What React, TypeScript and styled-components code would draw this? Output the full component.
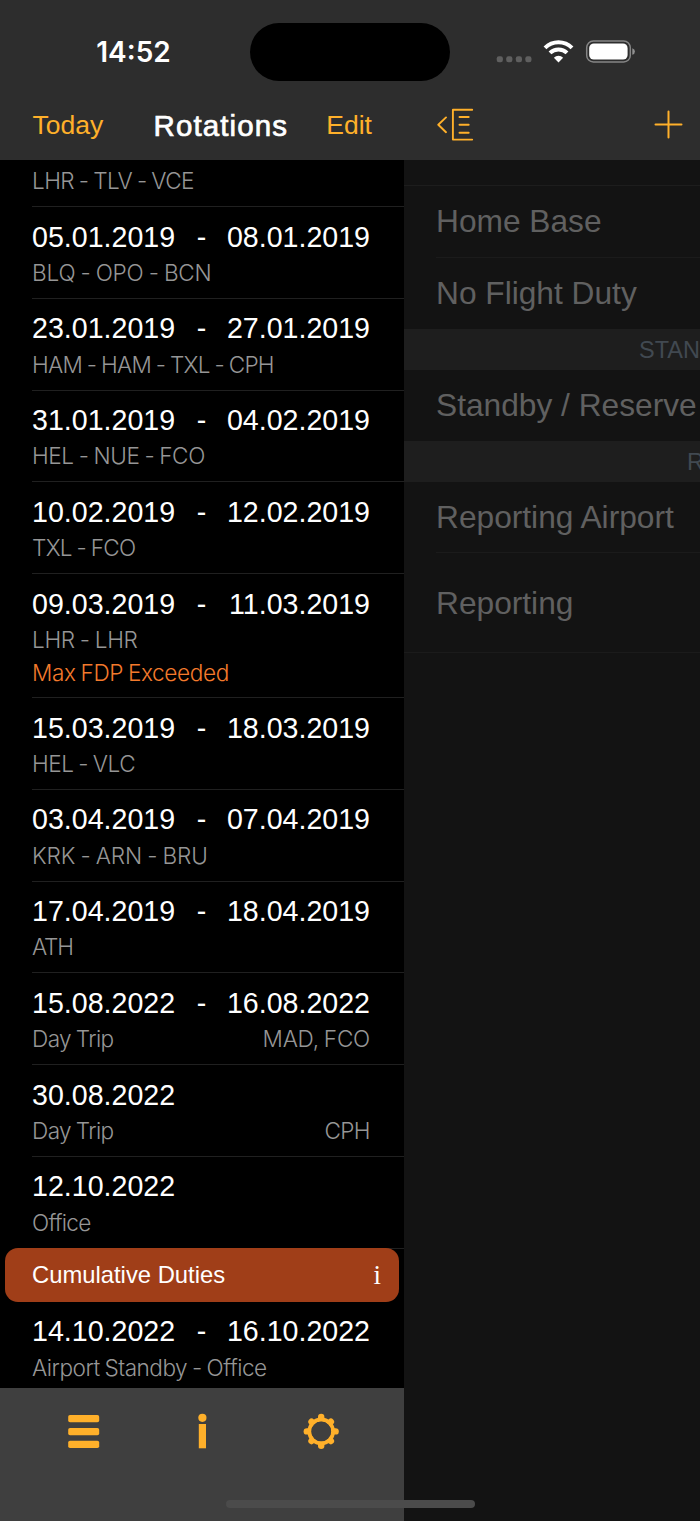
import React from "react";
import styled, { createGlobalStyle } from "styled-components";

const amber = "#ffb02a";
const sans = '"Liberation Sans", Arial, sans-serif';
const light = 'Inter, "Liberation Sans", sans-serif';

const GlobalStyle = createGlobalStyle`
  * { box-sizing: border-box; }
  body { margin: 0; background: #000; font-family: ${sans}; }
`;

const Screen = styled.div`
  position: relative;
  width: 700px;
  height: 1521px;
  display: flex;
  flex-direction: column;
  overflow: hidden;
`;

const Top = styled.header`
  height: 160px;
  flex: none;
  background: #2d2d2d;
`;

const StatusBar = styled.div`
  height: 104px;
  display: grid;
  grid-template-columns: 250px 200px 250px;
  align-items: center;
`;

const Clock = styled.div`
  padding: 0 0 0 17px;
  text-align: center;
  font: 600 28px/34px ${light};
  color: #fff;
`;

const Island = styled.div`
  height: 58px;
  border-radius: 29px;
  background: #000;
`;

const StatusIcons = styled.div`
  display: flex;
  align-items: center;
  padding-left: 46px;
`;

const NavBar = styled.nav`
  height: 56px;
  display: grid;
  grid-template-columns: 404px 296px;
`;

const NavGroup = styled.div<{ $right?: boolean }>`
  display: flex;
  justify-content: space-between;
  align-items: center;
  padding: ${(p) => (p.$right ? "0 17px 15px 33px" : "0 32px 14px 32.5px")};
`;

const NavButton = styled.button`
  border: 0;
  padding: 0;
  background: none;
  color: ${amber};
  font: 400 26.5px/32px ${sans};
  display: flex;
`;

const Title = styled.h1`
  margin: 0 0 -1px;
  padding-left: 12px;
  color: #fff;
  font: 400 29.5px/34px ${sans};
  letter-spacing: 1.1px;
  -webkit-text-stroke: 0.7px #fff;
`;

const Body = styled.div`
  flex: 1;
  min-height: 0;
  display: grid;
  grid-template-columns: 404px 296px;
`;

const Sidebar = styled.section`
  display: flex;
  flex-direction: column;
  min-height: 0;
  background: #000;
`;

const List = styled.div`
  height: 1228px;
  flex: none;
  overflow: hidden;
`;

const Row = styled.div<{ $tall?: boolean; $partial?: boolean }>`
  height: ${(p) => (p.$partial ? "47px" : p.$tall ? "124px" : "91.75px")};
  margin-left: 32px;
  padding: ${(p) => (p.$partial ? "5px 34px 0 0" : "12.5px 34px 0 0")};
  border-bottom: 1px solid #202020;
`;

const Dates = styled.div`
  display: grid;
  grid-template-columns: 145px 1fr 145px;
  font-size: 28.6px;
  line-height: 34px;
  color: #fff;
  white-space: nowrap;
`;

const Dash = styled.span`
  text-align: center;
  padding-left: 1px;
`;

const EndDate = styled.span`
  text-align: right;
`;

const Detail = styled.div<{ $flush?: boolean }>`
  margin-top: ${(p) => (p.$flush ? 0 : 3.25)}px;
  display: flex;
  justify-content: space-between;
  font: 300 22.6px/32px ${light};
  color: #969696;
`;

const Tracked = styled.span<{ $track?: number }>`
  letter-spacing: ${(p) => p.$track ?? -0.4}px;
  word-spacing: -1px;
`;

const Warning = styled.div`
  font: 300 22.6px/33px ${light};
  color: #f47a2c;
`;

const Card = styled.div`
  height: 54px;
  margin: -1px 5px 0.25px;
  padding: 0 18px 0 27px;
  border-radius: 13px;
  background: #a03e18;
  display: flex;
  justify-content: space-between;
  align-items: center;
  color: #fff;
  font-size: 23.8px;
`;

const InfoMark = styled.span`
  font: 400 27px/30px "Liberation Serif", serif;
`;

const TabBar = styled.footer`
  flex: 1;
  background: #3f3f3f;
  display: grid;
  grid-template-columns: repeat(3, 119px);
  justify-content: center;
  justify-items: center;
  align-items: start;
  padding: 22px 0 0 0;
`;

const Panel = styled.section`
  background: #131313;
  overflow: hidden;
`;

const Spacer = styled.div`
  height: 26px;
  border-bottom: 1px solid #1d1d1d;
`;

const Field = styled.div<{ $height: number; $line?: "inset" | "full" }>`
  height: ${(p) => p.$height}px;
  margin-left: ${(p) => (p.$line === "full" ? 0 : 32)}px;
  padding-left: ${(p) => (p.$line === "full" ? 32 : 0)}px;
  padding-top: ${(p) => (p.$line === "full" ? 2 : 0)}px;
  border-bottom: ${(p) => (p.$line ? "1px solid #1b1b1b" : "0")};
  display: flex;
  align-items: center;
  font-size: 31.7px;
  color: #606060;
  white-space: nowrap;
`;

const SectionHead = styled.div<{ $indent: number }>`
  height: 41px;
  padding-left: ${(p) => p.$indent}px;
  background: #1e1e1e;
  color: #414951;
  font-size: 23.5px;
  line-height: 42px;
  white-space: nowrap;
  overflow: hidden;
`;

const HomeIndicator = styled.div`
  position: absolute;
  left: 226px;
  bottom: 13px;
  width: 249px;
  height: 8px;
  border-radius: 4px;
  background: #4b4b4b;
`;

type Rotation = {
  from: string;
  to?: string;
  detail: string;
  track?: number;
  side?: string;
  sideTrack?: number;
  warning?: string;
};

const rotations: Rotation[] = [
  { from: "05.01.2019", to: "08.01.2019", detail: "BLQ - OPO - BCN", track: -0.2 },
  { from: "23.01.2019", to: "27.01.2019", detail: "HAM - HAM - TXL - CPH", track: -0.71 },
  { from: "31.01.2019", to: "04.02.2019", detail: "HEL - NUE - FCO", track: -0.4 },
  { from: "10.02.2019", to: "12.02.2019", detail: "TXL - FCO", track: -0.72 },
  { from: "09.03.2019", to: "11.03.2019", detail: "LHR - LHR", track: -0.33, warning: "Max FDP Exceeded" },
  { from: "15.03.2019", to: "18.03.2019", detail: "HEL - VLC", track: -0.5 },
  { from: "03.04.2019", to: "07.04.2019", detail: "KRK - ARN - BRU", track: -0.13 },
  { from: "17.04.2019", to: "18.04.2019", detail: "ATH", track: -1.2 },
  { from: "15.08.2022", to: "16.08.2022", detail: "Day Trip", track: -0.62, side: "MAD, FCO", sideTrack: -0.25 },
  { from: "30.08.2022", detail: "Day Trip", track: -0.62, side: "CPH", sideTrack: -0.6 },
  { from: "12.10.2022", detail: "Office", track: -0.75 },
];

const RotationRow = ({ from, to, detail, track, side, sideTrack, warning }: Rotation) => (
  <Row $tall={!!warning}>
    <Dates>
      <span>{from}</span>
      <Dash>{to ? "-" : ""}</Dash>
      <EndDate>{to}</EndDate>
    </Dates>
    <Detail>
      <Tracked $track={track}>{detail}</Tracked>
      {side && <Tracked $track={sideTrack}>{side}</Tracked>}
    </Detail>
    {warning && (
      <Warning>
        <Tracked>{warning}</Tracked>
      </Warning>
    )}
  </Row>
);

const StatusGlyphs = () => (
  <svg width="140" height="30" viewBox="496 37 140 30">
    <g fill="#5f5f5f">
      {[496.7, 506.2, 515.8, 525.3].map((x) => (
        <rect key={x} x={x} y="56.2" width="6.2" height="6" rx="2.2" />
      ))}
    </g>
    <g fill="none" stroke="#fff" strokeWidth="4">
      <path d="M545 47.8a19.2 19.2 0 0 1 27 0" />
      <path d="M550 52.9a12.2 12.2 0 0 1 17 0" />
    </g>
    <path d="M558.5 62.4l-4.6-4.7a6.6 6.6 0 0 1 9.2 0z" fill="#fff" />
    <rect x="586.7" y="41" width="43.6" height="21" rx="6.6" fill="none" stroke="#858585" strokeWidth="1.5" />
    <rect x="589.2" y="43.5" width="38.4" height="16" rx="4.6" fill="#fff" />
    <path d="M632.3 48.2q2.6.8 2.6 3.3t-2.6 3.3z" fill="#909090" />
  </svg>
);

const CollapseIcon = () => (
  <svg width="37" height="34" viewBox="437 108 37 34" fill="none" stroke={amber} strokeWidth="1.9" strokeLinecap="round" strokeLinejoin="round">
    <path d="M446 117.4l-7.7 7.4 7.7 7.4" />
    <path d="M472.2 109.8h-19.3v29.8h19.3M459.5 117h9.2M459.5 124.8h9.2M459.5 132.7h9.2" />
  </svg>
);

const PlusIcon = () => (
  <svg width="29" height="29" viewBox="0 0 29 29" fill="none" stroke={amber} strokeWidth="2" strokeLinecap="round">
    <path d="M14.5 1.5v26M1.5 14.5h26" />
  </svg>
);

const MenuIcon = () => (
  <svg width="36" height="42" viewBox="65 1410 36 42" fill={amber}>
    {[1415, 1428, 1440.8].map((y) => (
      <rect key={y} x="68.2" y={y} width="31" height="7.2" rx="1.8" />
    ))}
  </svg>
);

const InfoIcon = () => (
  <svg width="36" height="42" viewBox="184 1410 36 42" fill={amber}>
    <circle cx="202.4" cy="1417.8" r="4.1" />
    <rect x="198.8" y="1424" width="7.2" height="24.3" />
  </svg>
);

const GearIcon = () => (
  <svg width="36" height="42" viewBox="-18.2 -21.4 36 42">
    <circle r="11.8" fill="none" stroke={amber} strokeWidth="4" />
    <g stroke={amber} strokeWidth="6.4" strokeLinecap="round">
      {[0, 45, 90, 135, 180, 225, 270, 315].map((a) => (
        <path key={a} d={a % 90 ? "M0-12.6V-13.7" : "M0-12.8V-14.4"} transform={`rotate(${a})`} />
      ))}
    </g>
    <circle r="9.9" fill="#3f3f3f" />
  </svg>
);

export default function App() {
  return (
    <Screen>
      <GlobalStyle />
      <Top>
        <StatusBar>
          <Clock>14:52</Clock>
          <Island />
          <StatusIcons>
            <StatusGlyphs />
          </StatusIcons>
        </StatusBar>
        <NavBar>
          <NavGroup>
            <NavButton>Today</NavButton>
            <Title>Rotations</Title>
            <NavButton>Edit</NavButton>
          </NavGroup>
          <NavGroup $right>
            <NavButton aria-label="Collapse list"><CollapseIcon /></NavButton>
            <NavButton aria-label="Add"><PlusIcon /></NavButton>
          </NavGroup>
        </NavBar>
      </Top>
      <Body>
        <Sidebar>
          <List>
            <Row $partial>
              <Detail $flush>
                <Tracked $track={-0.6}>LHR - TLV - VCE</Tracked>
              </Detail>
            </Row>
            {rotations.map((r) => (
              <RotationRow key={r.from} {...r} />
            ))}
            <Card>
              <span>Cumulative Duties</span>
              <InfoMark>i</InfoMark>
            </Card>
            <RotationRow from="14.10.2022" to="16.10.2022" detail="Airport Standby - Office" track={-0.5} />
          </List>
          <TabBar>
            <MenuIcon />
            <InfoIcon />
            <GearIcon />
          </TabBar>
        </Sidebar>
        <Panel>
          <Spacer />
          <Field $height={72} $line="inset">Home Base</Field>
          <Field $height={71}>No Flight Duty</Field>
          <SectionHead $indent={235}>STAN</SectionHead>
          <Field $height={71}>Standby / Reserve</Field>
          <SectionHead $indent={283}>R</SectionHead>
          <Field $height={71} $line="inset">Reporting Airport</Field>
          <Field $height={100} $line="full">Reporting</Field>
        </Panel>
      </Body>
      <HomeIndicator />
    </Screen>
  );
}
